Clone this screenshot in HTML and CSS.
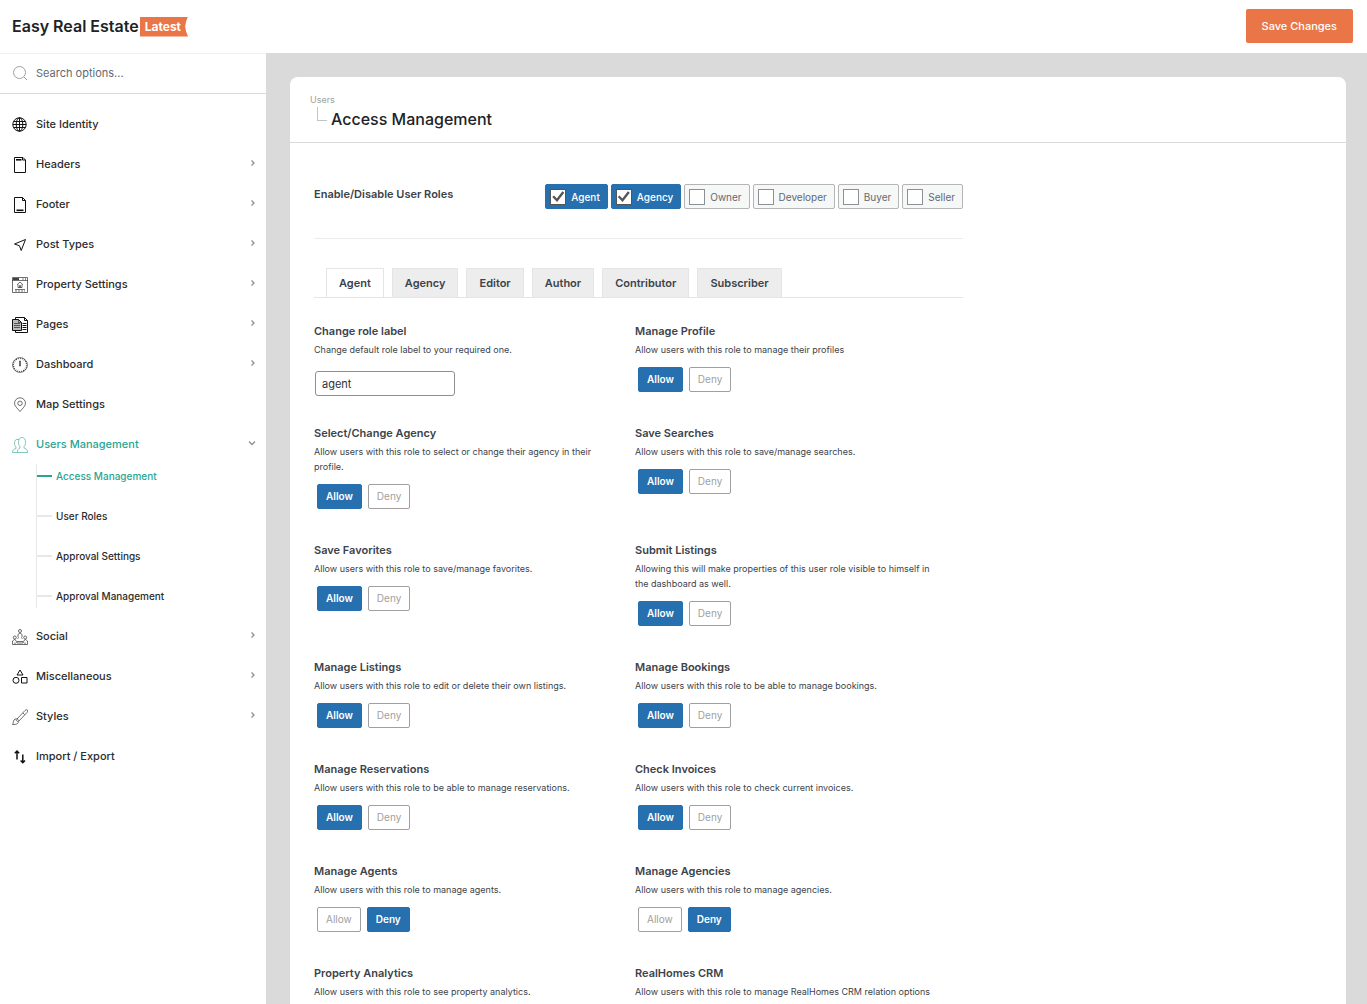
FILE: index.html
```html
<!DOCTYPE html>
<html lang="en">
<head>
    <meta charset="UTF-8">
    <meta name="viewport" content="width=device-width, initial-scale=1.0">
    <title>Easy Real Estate</title>
    <link rel="stylesheet" href="styles.css">
</head>
<body>
    <header class="topbar">
        <h1>Easy Real Estate</h1>
        <span class="badge">Latest</span>
        <button type="button" class="save">Save Changes</button>
    </header>

    <div class="layout">
        <aside class="sidebar">
            <label class="search">
                <svg width="16" height="16" viewBox="0 0 16 16"><circle cx="7.5" cy="7.5" r="6"/><path d="M12 12l3 3"/></svg>
                <input type="search" placeholder="Search options..." aria-label="Search options">
            </label>
            <nav>
                <ul class="menu">
                    <li><a href="#">
                        <svg class="icon" viewBox="0 0 16 16"><circle cx="7.5" cy="7.5" r="6.7"/><ellipse cx="7.5" cy="7.5" rx="3.3" ry="6.7"/><path d="M7.5 .8v13.4M.8 7.5h13.4M1.8 4.500h11.4M1.800 10.500h11.400"/></svg>
                        Site Identity</a></li>
                    <li><a href="#">
                        <svg class="icon" viewBox="0 0 16 16"><path d="M2.500.500h8.500l2.500 2.500v12.500h-11zM10.500.500v2.500h3"/><path class="bold" d="M4 2.800h5.500"/></svg>
                        Headers <svg class="arrow" viewBox="0 0 6 8"><path d="M1.5 1.5L4 4 1.5 6.5"/></svg></a></li>
                    <li><a href="#">
                        <svg class="icon" viewBox="0 0 16 16"><path d="M2.5.5h8l3 3v12h-11zM10.5.5v3h3"/><path class="bold" d="M4.5 13.3h7"/></svg>
                        Footer <svg class="arrow" viewBox="0 0 6 8"><path d="M1.5 1.5L4 4 1.5 6.5"/></svg></a></li>
                    <li><a href="#">
                        <svg class="icon" viewBox="0 0 16 16"><path d="M13.5 2.500L2.500 7l5 1.800 1.700 4.700z"/></svg>
                        Post Types <svg class="arrow" viewBox="0 0 6 8"><path d="M1.5 1.5L4 4 1.5 6.5"/></svg></a></li>
                    <li><a href="#">
                        <svg class="icon" viewBox="0 0 16 16"><path class="thin" d="M.5.5h15v15H.5zM.5 3.5h15M5 7.8L8 5l3 2.800M6 7.500v3h4v-3M7.500 10.500V8.500h1v2M3 12.500h10M3 14h2M6 14h2M9 14h2M12 14h1"/><path class="bold" d="M1 2h6"/><path d="M13 2h1M10.500 2h1"/></svg>
                        Property Settings <svg class="arrow" viewBox="0 0 6 8"><path d="M1.5 1.5L4 4 1.5 6.5"/></svg></a></li>
                    <li><a href="#">
                        <svg class="icon" viewBox="0 0 16 16"><path d="M3.5 2.5v-2h9l3 3v12h-12v-2M12.5.5v3h3M10.5 6.5h4M10.5 8.5h4M10.5 10.5h4M10.5 12.5h4"/><path class="shade" d="M.5 2.5h6l3 3v8h-9z"/><path class="thin" d="M6.5 2.5v3h3M2 6.5h6M2 8.5h6M2 10.5h6"/></svg>
                        Pages <svg class="arrow" viewBox="0 0 6 8"><path d="M1.5 1.5L4 4 1.5 6.5"/></svg></a></li>
                    <li><a href="#">
                        <svg class="icon thin" viewBox="0 0 16 16"><circle cx="8" cy="8" r="7.4"/><circle class="ticks" cx="8" cy="8" r="6.5"/><path d="M7.5 4v5h1V4z"/></svg>
                        Dashboard <svg class="arrow" viewBox="0 0 6 8"><path d="M1.5 1.5L4 4 1.5 6.5"/></svg></a></li>
                    <li><a href="#">
                        <svg class="icon thin" viewBox="0 0 16 16"><path d="M8 14.5C5.5 11.5 2.500 9 2.500 6.300a5.500 5.500 0 0 1 11 0C13.500 9 10.500 11.500 8 14.500z"/><circle cx="8" cy="6.300" r="2.200"/></svg>
                        Map Settings</a></li>
                    <li><a href="#" class="current">
                        <svg class="icon thin" viewBox="0 0 16 16"><path d="M5.5 15.5h10c0-3-1-3.500-3.500-4.500v-1.500c1-1 1.500-2 1.500-4C13.500 2.500 12.500.500 10 .500S6.500 2.500 6.500 5.500c0 2 .5 3 1.500 4V11c-2 1-2.500 1.500-2.500 4.500zM7 2.500c-3-.8-4.500.8-4.500 3.500 0 2 .5 3 1.500 4v1.500c-2.500.8-3.500 1.500-3.500 4h5"/></svg>
                        Users Management <svg class="arrow down" viewBox="0 0 8 6"><path d="M1 1.500L4 4.500 7 1.500"/></svg></a>
                        <ul class="submenu">
                            <li><a href="#" class="current">Access Management</a></li>
                            <li><a href="#">User Roles</a></li>
                            <li><a href="#">Approval Settings</a></li>
                            <li><a href="#">Approval Management</a></li>
                        </ul>
                    </li>
                    <li><a href="#">
                        <svg class="icon thin" viewBox="0 0 16 16"><circle cx="8" cy="2" r="1.5"/><path d="M6 8V5.5l2-1.5 2 1.5V8M5.5 9.5L7 8.5M10.5 9.5L9 8.5M5 12.5h6"/><circle cx="2.8" cy="8.5" r="1.5"/><circle cx="13.2" cy="8.5" r="1.5"/><path d="M.5 15.5v-3.5l2-1.5 1.5 1 1 2.500h6l1-2.500 1.500-1 2 1.500v3.500zM3 15.500V13.500M13 15.500V13.500"/></svg>
                        Social <svg class="arrow" viewBox="0 0 6 8"><path d="M1.5 1.5L4 4 1.5 6.5"/></svg></a></li>
                    <li><a href="#">
                        <svg class="icon" viewBox="0 0 16 16"><path d="M8 1l3 5H5zM9.500 8.500h5.500v5.500H9.500z"/><circle cx="4" cy="11.300" r="3"/></svg>
                        Miscellaneous <svg class="arrow" viewBox="0 0 6 8"><path d="M1.5 1.5L4 4 1.5 6.5"/></svg></a></li>
                    <li><a href="#">
                        <svg class="icon thin" viewBox="0 0 16 16"><path d="M.5 15.5c1-1 .5-3 1.500-4.500s3-1.500 4-.5.8 3-.5 4-3 1-5 1zM5 10l8-8.500c.8-.8 2-.8 2.500-.5.3.5.3 1.500-.5 2.500L7 12M11 4l1.500 1.500M4 10.500c0 1 1 2 2 2"/></svg>
                        Styles <svg class="arrow" viewBox="0 0 6 8"><path d="M1.5 1.5L4 4 1.5 6.5"/></svg></a></li>
                    <li><a href="#">
                        <svg class="icon heavy" viewBox="0 0 16 16"><path d="M5 10.5V2M2.800 4.200L5 2l2.200 2.200M10.800 5.500v8M8.600 11.500l2.200 2.200 2.200-2.200"/></svg>
                        Import / Export</a></li>
                </ul>
            </nav>
        </aside>

        <main class="content">
            <section class="card">
                <div class="card-head">
                    <span class="parent">Users</span>
                    <h2>Access Management</h2>
                </div>
                <div class="card-body">
                    <fieldset class="roles">
                        <legend class="roles-title">Enable/Disable User Roles</legend>
                        <div class="chips">
                            <label class="chip"><input type="checkbox" checked>Agent</label>
                            <label class="chip"><input type="checkbox" checked>Agency</label>
                            <label class="chip"><input type="checkbox">Owner</label>
                            <label class="chip"><input type="checkbox">Developer</label>
                            <label class="chip"><input type="checkbox">Buyer</label>
                            <label class="chip"><input type="checkbox">Seller</label>
                        </div>
                    </fieldset>

                    <div class="tabs" role="tablist">
                        <button type="button" role="tab" class="tab active" aria-selected="true">Agent</button>
                        <button type="button" role="tab" class="tab">Agency</button>
                        <button type="button" role="tab" class="tab">Editor</button>
                        <button type="button" role="tab" class="tab">Author</button>
                        <button type="button" role="tab" class="tab">Contributor</button>
                        <button type="button" role="tab" class="tab">Subscriber</button>
                    </div>

                    <div class="options">
                        <div class="option">
                            <h3><label for="roleLabel">Change role label</label></h3>
                            <p>Change default role label to your required one.</p>
                            <input type="text" id="roleLabel" class="text" value="agent">
                        </div>
                        <div class="option">
                            <h3>Manage Profile</h3>
                            <p>Allow users with this role to manage their profiles</p>
                            <div class="switch">
                                <label><input type="radio" name="profile" checked>Allow</label>
                                <label><input type="radio" name="profile">Deny</label>
                            </div>
                        </div>
                        <div class="option">
                            <h3>Select/Change Agency</h3>
                            <p>Allow users with this role to select or change their agency in their profile.</p>
                            <div class="switch">
                                <label><input type="radio" name="agency" checked>Allow</label>
                                <label><input type="radio" name="agency">Deny</label>
                            </div>
                        </div>
                        <div class="option">
                            <h3>Save Searches</h3>
                            <p>Allow users with this role to save/manage searches.</p>
                            <div class="switch">
                                <label><input type="radio" name="searches" checked>Allow</label>
                                <label><input type="radio" name="searches">Deny</label>
                            </div>
                        </div>
                        <div class="option">
                            <h3>Save Favorites</h3>
                            <p>Allow users with this role to save/manage favorites.</p>
                            <div class="switch">
                                <label><input type="radio" name="favorites" checked>Allow</label>
                                <label><input type="radio" name="favorites">Deny</label>
                            </div>
                        </div>
                        <div class="option">
                            <h3>Submit Listings</h3>
                            <p>Allowing this will make properties of this user role visible to himself in the dashboard as well.</p>
                            <div class="switch">
                                <label><input type="radio" name="submit" checked>Allow</label>
                                <label><input type="radio" name="submit">Deny</label>
                            </div>
                        </div>
                        <div class="option">
                            <h3>Manage Listings</h3>
                            <p>Allow users with this role to edit or delete their own listings.</p>
                            <div class="switch">
                                <label><input type="radio" name="listings" checked>Allow</label>
                                <label><input type="radio" name="listings">Deny</label>
                            </div>
                        </div>
                        <div class="option">
                            <h3>Manage Bookings</h3>
                            <p>Allow users with this role to be able to manage bookings.</p>
                            <div class="switch">
                                <label><input type="radio" name="bookings" checked>Allow</label>
                                <label><input type="radio" name="bookings">Deny</label>
                            </div>
                        </div>
                        <div class="option">
                            <h3>Manage Reservations</h3>
                            <p>Allow users with this role to be able to manage reservations.</p>
                            <div class="switch">
                                <label><input type="radio" name="reservations" checked>Allow</label>
                                <label><input type="radio" name="reservations">Deny</label>
                            </div>
                        </div>
                        <div class="option">
                            <h3>Check Invoices</h3>
                            <p>Allow users with this role to check current invoices.</p>
                            <div class="switch">
                                <label><input type="radio" name="invoices" checked>Allow</label>
                                <label><input type="radio" name="invoices">Deny</label>
                            </div>
                        </div>
                        <div class="option">
                            <h3>Manage Agents</h3>
                            <p>Allow users with this role to manage agents.</p>
                            <div class="switch">
                                <label><input type="radio" name="agents">Allow</label>
                                <label><input type="radio" name="agents" checked>Deny</label>
                            </div>
                        </div>
                        <div class="option">
                            <h3>Manage Agencies</h3>
                            <p>Allow users with this role to manage agencies.</p>
                            <div class="switch">
                                <label><input type="radio" name="agencies">Allow</label>
                                <label><input type="radio" name="agencies" checked>Deny</label>
                            </div>
                        </div>
                        <div class="option">
                            <h3>Property Analytics</h3>
                            <p>Allow users with this role to see property analytics.</p>
                        </div>
                        <div class="option">
                            <h3>RealHomes CRM</h3>
                            <p>Allow users with this role to manage RealHomes CRM relation options</p>
                        </div>
                    </div>
                </div>
            </section>
        </main>
    </div>
</body>
</html>
```

FILE: styles.css
```css
* {
    box-sizing: border-box;
}
body {
    display: flex;
    flex-direction: column;
    height: 100vh;
    margin: 0;
    overflow: hidden;
    background-color: #fff;
    color: #3c434a;
    font-family: Inter, "Liberation Sans", sans-serif;
    font-size: 11px;
}
h1, h2, h3, p, ul {
    margin: 0;
    padding: 0;
}
ul {
    list-style: none;
}
a {
    color: inherit;
    text-decoration: none;
}
button, input {
    font-family: inherit;
}
svg {
    flex: none;
    fill: none;
    stroke: currentColor;
}

/* top bar */
.topbar {
    display: flex;
    flex: none;
    align-items: center;
    height: 53px;
    padding: 0 14px 2px 12px;
}
.topbar h1 {
    color: #1d2327;
    font-size: 16px;
    font-weight: 600;
}
.badge {
    height: 20px;
    margin: 2px 0 0 1px;
    padding: 0 7px 0 5px;
    background-color: #ea7546;
    color: #fff;
    font-size: 12px;
    font-weight: 700;
    line-height: 20px;
    clip-path: polygon(0 0, 100% 0, 96% 25%, 94% 50%, 96% 75%, 100% 100%, 0 100%);
}
.save {
    height: 34px;
    margin-left: auto;
    padding: 0 16px;
    border: 0;
    border-radius: 2px;
    background-color: #ea7546;
    color: #fff;
    font-size: 11px;
    font-weight: 500;
    cursor: pointer;
}

.layout {
    display: flex;
    flex: 1;
    min-height: 0;
}

/* sidebar */
.sidebar {
    flex: none;
    width: 266px;
    border-top: 1px solid #f0f0f0;
}
.search {
    display: flex;
    align-items: center;
    gap: 8px;
    height: 40px;
    padding: 0 12px 2px;
    border-bottom: 1px solid #dadada;
    color: #a0a0a0;
}
.search input {
    flex: 1;
    padding: 0;
    border: 0;
    outline: none;
    background: none;
    font-size: 11px;
}
.search input::placeholder {
    color: #646970;
}
.menu {
    padding-top: 10px;
    color: #2c2c2c;
    font-weight: 500;
}
.menu > li > a {
    display: flex;
    align-items: center;
    gap: 8px;
    height: 40px;
    padding: 0 10px 0 12px;
}
.icon {
    width: 16px;
    height: 16px;
    margin-top: 2px;
    color: #111;
}
.thin {
    stroke-width: 0.6;
}
.heavy {
    stroke-width: 1.5;
}
.bold {
    stroke-width: 1.6;
}
.shade {
    fill: #bbb;
}
.ticks {
    stroke-dasharray: 0.6 1.4;
    stroke-width: 1.2;
}
.arrow {
    width: 6px;
    height: 8px;
    margin: 0 0 2px auto;
    color: #8c8f94;
    stroke-width: 1.3;
}
.arrow.down {
    width: 8px;
    height: 6px;
}
.menu .current, .current .icon {
    color: #2aa592;
}
.submenu {
    display: flex;
    flex-direction: column;
    gap: 16px;
    margin: 0 0 8px 36px;
    border-left: 1px solid #e8e8e8;
    font-size: 10px;
}
.submenu a {
    display: flex;
    align-items: center;
    gap: 4px;
    height: 24px;
}
.submenu a::before {
    content: "";
    width: 15px;
    height: 2px;
    background-color: #e8e8e8;
}
.submenu a.current::before {
    background-color: #2aa592;
}

/* content card */
.content {
    flex: 1;
    padding: 24px 21px 24px 24px;
    overflow-y: auto;
    scrollbar-width: none;
    background-color: #dadada;
}
.card {
    border-radius: 8px;
    background-color: #fff;
}
.card-head {
    padding: 16px 20px 11px;
    border-bottom: 1px solid #dadada;
}
.parent {
    display: block;
    color: #a0a0a0;
    font-size: 9px;
    line-height: 14px;
}
.card-head h2 {
    display: flex;
    gap: 4px;
    color: #1d2327;
    font-size: 16px;
    font-weight: 500;
    line-height: 24px;
}
.card-head h2::before {
    content: "";
    width: 9px;
    height: 13px;
    margin-left: 7px;
    border: solid #c3c4c7;
    border-width: 0 0 1px 1px;
}
.card-body {
    max-width: 697px;
    padding: 41px 24px 24px;
}
.roles {
    display: flex;
    justify-content: flex-end;
    margin: 0;
    padding: 0 0 29px;
    border: 0;
    border-bottom: 1px solid #ebebeb;
}
.roles-title {
    float: left;
    margin-right: auto;
    padding: 0;
    font-size: 11px;
    font-weight: 600;
    line-height: 20px;
}
.chips {
    display: flex;
    gap: 3px;
}
.chip {
    display: flex;
    align-items: center;
    gap: 5px;
    height: 25px;
    padding: 0 7px 0 4px;
    border: 1px solid #b5b5b5;
    border-radius: 2px;
    background-color: #f6f7f7;
    color: #646970;
    font-size: 10px;
}
.chip input {
    display: grid;
    place-items: center;
    appearance: none;
    width: 16px;
    height: 16px;
    margin: 0;
    border: 1px solid #8c8f94;
    background-color: #fff;
}
.chip input:checked {
    border-color: #555;
}
.chip input:checked::before {
    content: "";
    width: 12px;
    height: 12px;
    background-color: #555;
    clip-path: polygon(0 55%, 14% 42%, 38% 66%, 84% 6%, 100% 18%, 40% 95%);
}
.chip:has(:checked) {
    border-color: #2770b0;
    background-color: #2770b0;
    color: #fff;
    font-weight: 500;
}
.tabs {
    display: flex;
    gap: 8px;
    margin-top: 29px;
    padding: 0 12px;
    border-bottom: 1px solid #e5e5e5;
}
.tab {
    height: 29px;
    padding: 0 12px;
    border: 1px solid #e5e5e5;
    border-bottom: 0;
    background-color: #ededed;
    color: #3c434a;
    font-size: 11px;
    font-weight: 600;
}
.tab.active {
    background-color: #fff;
}

/* options grid */
.options {
    display: grid;
    grid-template-columns: 1fr 1fr;
    row-gap: 30px;
    margin: 26px 7px 0 0;
}
.option h3 {
    margin-bottom: 4px;
    font-size: 11px;
    font-weight: 600;
    line-height: 14px;
}
.option p {
    padding-right: 20px;
    font-size: 9px;
    line-height: 15px;
}
.text {
    width: 140px;
    height: 25px;
    margin: 14px 1px 0;
    padding: 0 6px;
    border: 1px solid #8c8f94;
    border-radius: 3px;
    color: #2c3338;
    font-size: 11px;
}
.switch {
    display: flex;
    gap: 6px;
    margin-top: 10px;
    padding: 0 3px 4px;
}
.switch label {
    height: 25px;
    padding: 0 8px;
    border: 1px solid #a0a0a0;
    border-radius: 2px;
    color: #a0a0a0;
    font-size: 10px;
    line-height: 23px;
    cursor: pointer;
}
.switch input {
    position: absolute;
    opacity: 0;
}
.switch label:has(:checked) {
    border-color: #2770b0;
    background-color: #2770b0;
    color: #fff;
    font-weight: 600;
}
```
